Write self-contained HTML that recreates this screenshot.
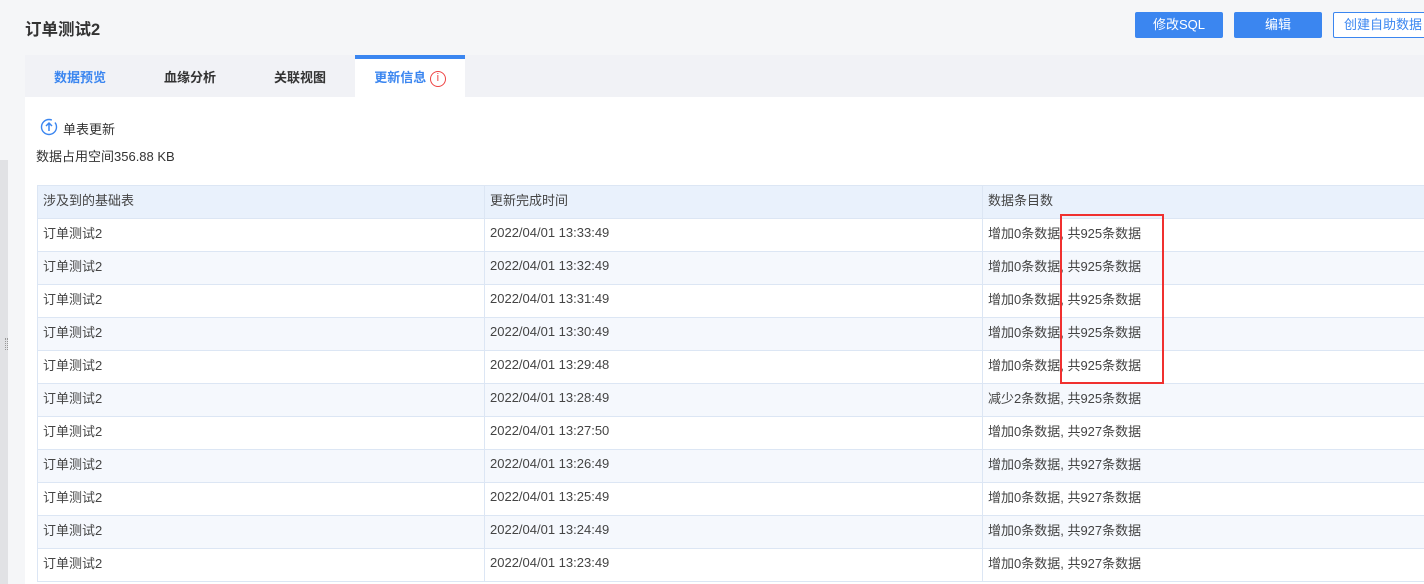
<!DOCTYPE html>
<html><head><meta charset="utf-8"><style>
*{margin:0;padding:0;box-sizing:border-box}
body{width:1424px;height:584px;overflow:hidden;background:#f5f6f8;font-family:"Liberation Sans","Noto Sans CJK SC",sans-serif;color:#333;position:relative}
.abs{position:absolute}
.title{left:25px;top:16px;font-size:16.5px;font-weight:bold;color:#333}
.btn{top:12px;height:26px;border-radius:2px;font-size:13px;line-height:26px;text-align:center}
.panel{left:25px;top:55px;width:1399px;height:529px;background:#fff}
.tabs{left:25px;top:55px;width:1399px;height:42px;background:#f1f2f6}
.tab{top:55px;height:42px;line-height:46px;font-size:13px;font-weight:bold;text-align:center;color:#333}
table{position:absolute;left:37px;top:185px;border-collapse:collapse;font-size:13px;color:#444;table-layout:fixed;width:1405px}
td{border:1px solid #dce6f4;height:33px;padding:0 5px 5px;white-space:nowrap;overflow:hidden}
tr.h td{background:#e9f1fc;height:33px}
tr.alt td{background:#f5f8fd}
</style></head><body>
<div class="abs" style="left:0;top:160px;width:8px;height:424px;background:#e1e2e5"></div>
<div class="abs" style="left:5px;top:338px;width:3px;height:12px;border-left:1px dotted #999;border-right:1px dotted #999"></div>
<div class="abs title">订单测试2</div>
<div class="abs btn" style="left:1135px;width:88px;background:#3b86f0;color:#fff">修改SQL</div>
<div class="abs btn" style="left:1234px;width:88px;background:#3b86f0;color:#fff">编辑</div>
<div class="abs btn" style="left:1333px;width:100px;border:1px solid #3b86f0;background:#fff;color:#3b86f0;line-height:24px">创建自助数据</div>
<div class="abs panel"></div>
<div class="abs tabs"></div>
<div class="abs tab" style="left:25px;width:110px;color:#3b86f0">数据预览</div>
<div class="abs tab" style="left:135px;width:110px">血缘分析</div>
<div class="abs tab" style="left:245px;width:110px">关联视图</div>
<div class="abs tab" style="left:355px;width:110px;background:#fff;border-top:4px solid #3b86f0;line-height:38px;color:#3b86f0">更新信息 <span style="display:inline-block;width:16px;height:16px;border:1.5px solid #e44;border-radius:50%;color:#e44;font-size:11px;line-height:13px;font-weight:normal;vertical-align:1px">i</span></div>
<svg class="abs" style="left:40px;top:118px" width="18" height="18" viewBox="0 0 18 18"><circle cx="9" cy="9" r="7.5" fill="none" stroke="#3b86f0" stroke-width="1.4" stroke-dasharray="38 4"/><path d="M9 13V5M6 8l3-3 3 3" fill="none" stroke="#3b86f0" stroke-width="1.5"/></svg>
<div class="abs" style="left:63px;top:119px;font-size:13px">单表更新</div>
<div class="abs" style="left:36px;top:146px;font-size:13px">数据占用空间356.88 KB</div>
<table>
<colgroup><col style="width:447px"><col style="width:498px"><col style="width:460px"></colgroup>
<tr class="h"><td>涉及到的基础表</td><td>更新完成时间</td><td>数据条目数</td></tr>
<tr><td>订单测试2</td><td>2022/04/01 13:33:49</td><td>增加0条数据, 共925条数据</td></tr>
<tr class="alt"><td>订单测试2</td><td>2022/04/01 13:32:49</td><td>增加0条数据, 共925条数据</td></tr>
<tr><td>订单测试2</td><td>2022/04/01 13:31:49</td><td>增加0条数据, 共925条数据</td></tr>
<tr class="alt"><td>订单测试2</td><td>2022/04/01 13:30:49</td><td>增加0条数据, 共925条数据</td></tr>
<tr><td>订单测试2</td><td>2022/04/01 13:29:48</td><td>增加0条数据, 共925条数据</td></tr>
<tr class="alt"><td>订单测试2</td><td>2022/04/01 13:28:49</td><td>减少2条数据, 共925条数据</td></tr>
<tr><td>订单测试2</td><td>2022/04/01 13:27:50</td><td>增加0条数据, 共927条数据</td></tr>
<tr class="alt"><td>订单测试2</td><td>2022/04/01 13:26:49</td><td>增加0条数据, 共927条数据</td></tr>
<tr><td>订单测试2</td><td>2022/04/01 13:25:49</td><td>增加0条数据, 共927条数据</td></tr>
<tr class="alt"><td>订单测试2</td><td>2022/04/01 13:24:49</td><td>增加0条数据, 共927条数据</td></tr>
<tr><td>订单测试2</td><td>2022/04/01 13:23:49</td><td>增加0条数据, 共927条数据</td></tr>
</table>
<div class="abs" style="left:1060px;top:214px;width:104px;height:170px;border:2px solid #f0302f"></div>
</body></html>
